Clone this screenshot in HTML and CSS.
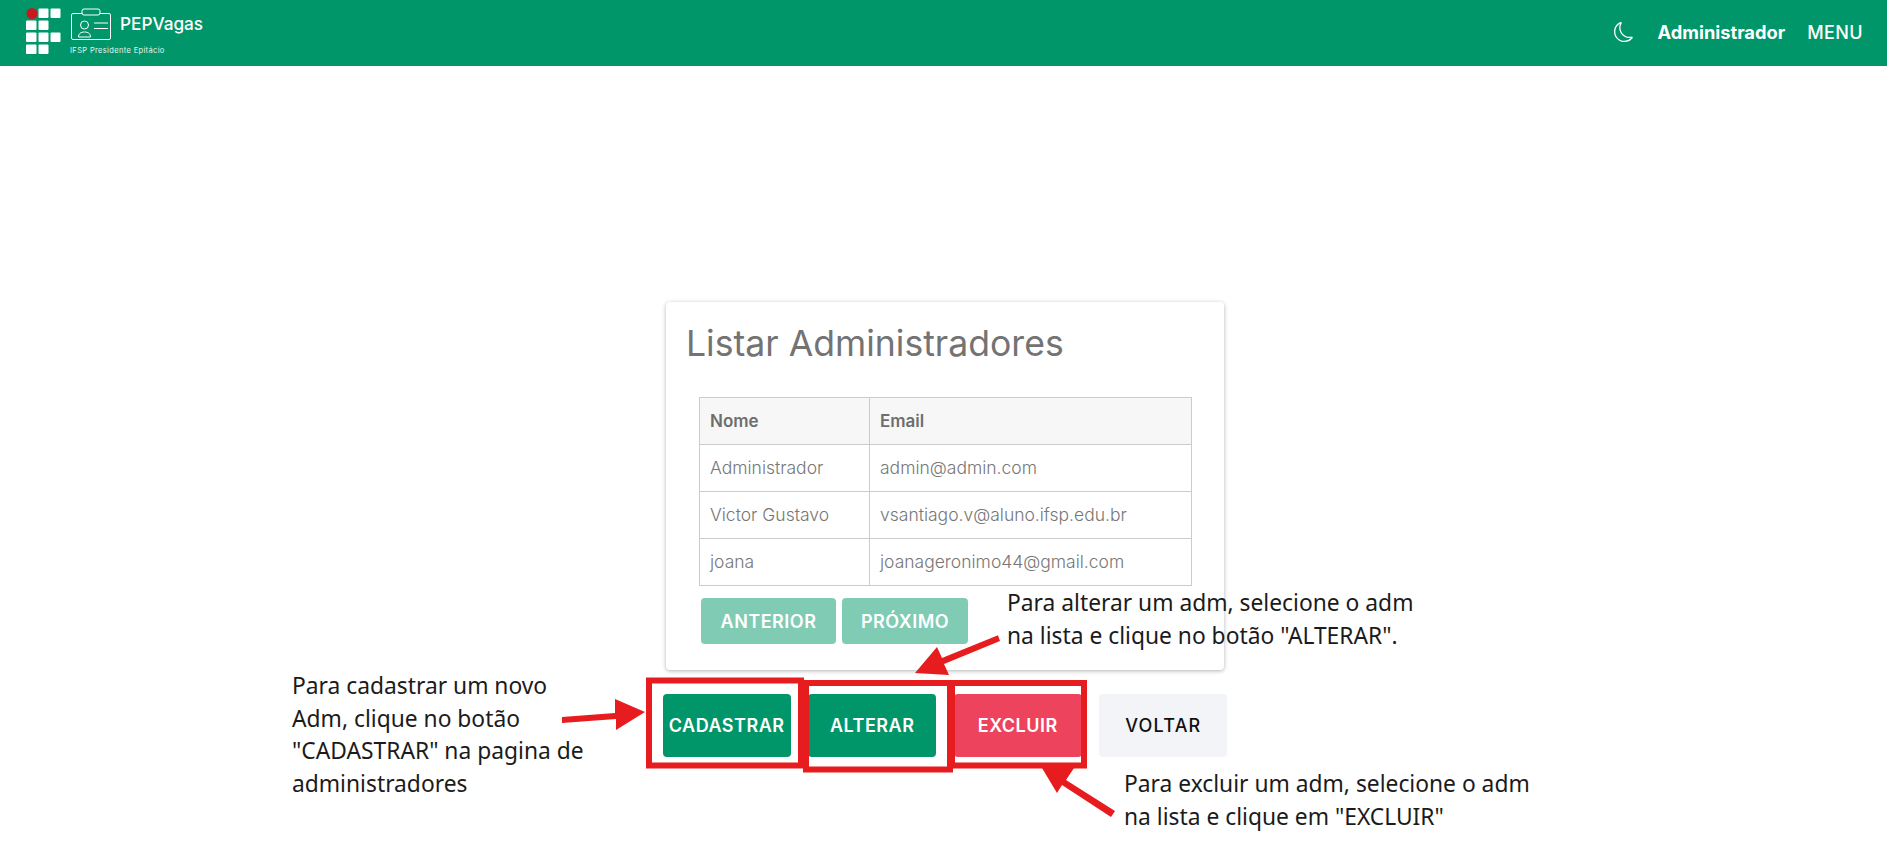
FILE: index.html
```html
<!DOCTYPE html>
<html lang="pt-BR">
<head>
<meta charset="utf-8">
<title>PEPVagas</title>
<link rel="stylesheet" href="styles.css">
</head>
<body>
<header class="topbar">
  <div class="brand">
    <svg class="if-logo" width="36" height="48" viewBox="0 0 36 48">
      <circle cx="6" cy="5.500" r="5.500" fill="#c8191f"/>
      <g fill="#fff">
        <rect x="12.500" y="0.500" width="10" height="9.500" rx="1"/><rect x="24.500" y="0.500" width="10" height="9.500" rx="1"/>
        <rect y="12.500" width="10.500" height="9.500" rx="1"/><rect x="12.500" y="12.500" width="10" height="9.500" rx="1"/>
        <rect y="24.500" width="10.500" height="9.500" rx="1"/><rect x="12.500" y="24.500" width="10" height="9.500" rx="1"/><rect x="24.500" y="24.500" width="10" height="9.500" rx="1"/>
        <rect y="36.500" width="10.500" height="9.500" rx="1"/><rect x="12.500" y="36.500" width="10" height="9.500" rx="1"/>
      </g>
    </svg>
    <div class="brand-text">
      <div class="brand-row">
        <svg class="badge-icon" width="42" height="32" viewBox="0 0 42 32" fill="none" stroke="#fff" stroke-width="1">
          <rect x="1.500" y="5.500" width="39" height="26" rx="1.500"/>
          <rect x="12" y="1" width="18" height="6" rx="2" fill="#009669"/>
          <circle cx="14.500" cy="17" r="4"/>
          <path d="M8.500 29c0-3.500 2.500-5 6-5s6 1.500 6 5z"/>
          <path d="M24 15h14M24 20.500h14"/>
        </svg>
        <span class="brand-name">PEPVagas</span>
      </div>
      <div class="brand-sub">IFSP Presidente Epitácio</div>
    </div>
  </div>
  <nav class="topnav">
    <svg class="moon" width="20" height="20" viewBox="0 0 16 16" fill="#fff">
      <path d="M6 .278a.768.768 0 0 1 .08.858 7.208 7.208 0 0 0-.878 3.46c0 4.021 3.278 7.277 7.318 7.277.527 0 1.04-.055 1.533-.16a.787.787 0 0 1 .81.316.733.733 0 0 1-.031.893A8.349 8.349 0 0 1 8.344 16C3.734 16 0 12.286 0 7.71 0 4.266 2.114 1.312 5.124.06A.752.752 0 0 1 6 .278zM4.858 1.311A7.269 7.269 0 0 0 1.025 7.71c0 4.02 3.279 7.276 7.319 7.276a7.316 7.316 0 0 0 5.205-2.162c-.337.042-.68.063-1.029.063-4.61 0-8.343-3.714-8.343-8.29 0-1.167.242-2.278.681-3.286z"/>
    </svg>
    <span class="nav-user">Administrador</span>
    <span class="nav-menu">MENU</span>
  </nav>
</header>

<main class="content">
  <section class="card">
    <h1 class="card-title">Listar Administradores</h1>
    <table class="admin-table">
      <thead>
        <tr><th class="col-name">Nome</th><th>Email</th></tr>
      </thead>
      <tbody>
        <tr><td>Administrador</td><td>admin@admin.com</td></tr>
        <tr><td>Victor Gustavo</td><td>vsantiago.v@aluno.ifsp.edu.br</td></tr>
        <tr><td>joana</td><td>joanageronimo44@gmail.com</td></tr>
      </tbody>
    </table>
    <div class="pager">
      <button class="btn-page">ANTERIOR</button>
      <button class="btn-page">PRÓXIMO</button>
    </div>
  </section>
  <div class="actions">
    <button class="btn btn-green">CADASTRAR</button>
    <button class="btn btn-green">ALTERAR</button>
    <button class="btn btn-red">EXCLUIR</button>
    <button class="btn btn-light">VOLTAR</button>
  </div>
</main>

<svg class="marks" width="1887" height="852" viewBox="0 0 1887 852" fill="none">
  <g stroke="#e71c1e" stroke-width="6">
    <rect x="649" y="680.500" width="152" height="85"/>
    <rect x="952" y="683" width="132" height="82.500"/>
    <rect x="806" y="683" width="144" height="86.500"/>
  </g>
  <g fill="#e71c1e">
    <path d="M562 717L615 713L615 699L645 712L616 730L616 719L562 723z"/>
    <path d="M998 635.200L942 658L937 647L915 673L949 675L944 664L1000 641z"/>
    <path d="M1042 768L1074 768L1066 780L1115 811L1111 817L1062 785L1057 793z"/>
  </g>
</svg>
<p class="note note-create">Para cadastrar um novo<br>Adm, clique no botão<br>"CADASTRAR" na pagina de<br>administradores</p>
<p class="note note-edit">Para alterar um adm, selecione o adm<br>na lista e clique no botão "ALTERAR".</p>
<p class="note note-delete">Para excluir um adm, selecione o adm<br>na lista e clique em "EXCLUIR"</p>
</body>
</html>
```
FILE: styles.css
```css
html, body {
  margin: 0;
  padding: 0;
  height: 852px;
  overflow: hidden;
  background: #fff;
  font-family: Inter, "Liberation Sans", sans-serif;
}
.topbar {
  height: 66px;
  background: #009669;
  color: #fff;
  display: flex;
  align-items: center;
  justify-content: space-between;
  padding: 0 24px 0 26px;
  box-sizing: border-box;
}
.brand {
  display: flex;
  align-items: flex-start;
  gap: 10px;
  margin-top: -4px;
}
.if-logo { display: block; margin-top: 1px; }
.brand-text { margin-top: 1px; margin-left: -2px; }
.brand-row {
  display: flex;
  align-items: center;
  gap: 8px;
}
.brand-name {
  font-size: 17.200px;
  font-weight: 500;
  line-height: 32px;
}
.brand-sub {
  font-size: 7.500px;
  line-height: 10px;
  margin-top: 6px;
  letter-spacing: .35px;
  color: #e8f5f0;
}
.topnav {
  display: flex;
  align-items: center;
  padding-bottom: 2px;
}
.moon { margin-right: 24px; }
.nav-user {
  font-size: 18.300px;
  font-weight: 700;
  margin-right: 22px;
}
.nav-menu {
  font-size: 18px;
  font-weight: 500;
  letter-spacing: .4px;
}
.content {
  display: flex;
  flex-direction: column;
  align-items: center;
  padding: 236px 0 0 3px;
}
.card {
  width: 558px;
  height: 368px;
  box-sizing: border-box;
  padding: 0 33px 0 20px;
  background: #fff;
  border-radius: 4px;
  box-shadow: 0 1px 4px rgba(0, 0, 0, .3);
}
.card-title {
  margin: 20px 0 31px 0;
  font-size: 35.600px;
  line-height: 44px;
  font-weight: 400;
  color: #737373;
}
.admin-table {
  margin-left: 13px;
  width: 493px;
  border-collapse: collapse;
  font-size: 17.500px;
  color: #777;
}
.admin-table th, .admin-table td {
  height: 47px;
  box-sizing: border-box;
  padding: 0 10px;
  border: 1px solid #ccc;
  text-align: left;
  font-weight: 300;
}
.admin-table td { padding-bottom: 2px; }
.admin-table th {
  background: #f7f7f7;
  font-weight: 600;
  font-size: 17px;
  color: #6e6e6e;
}
.col-name { width: 170px; }
.pager {
  display: flex;
  gap: 6px;
  margin: 12px 0 0 15px;
}
.btn-page {
  width: 135px;
  height: 46px;
  border: 0;
  border-radius: 4px;
  background: #80cbb4;
  color: #fff;
  font: 600 18px Inter, sans-serif;
  letter-spacing: .5px;
}
.btn-page + .btn-page { width: 126px; }
.actions {
  display: flex;
  gap: 17.600px;
  margin-top: 24px;
}
.btn {
  width: 128px;
  height: 63px;
  border: 0;
  border-radius: 4px;
  padding: 0;
  font: 600 18px Inter, sans-serif;
  letter-spacing: .5px;
  color: #fff;
}
.btn-green { background: #009669; }
.btn-red { background: #ee435d; }
.btn-light { background: #f3f4f8; color: #111; font-weight: 500; letter-spacing: 1.200px; }
.marks {
  position: absolute;
  left: 0;
  top: 0;
}
.note {
  position: absolute;
  margin: 0;
  font-family: "Noto Sans", sans-serif;
  font-size: 22.800px;
  line-height: 32.500px;
  color: #1b1b1b;
  white-space: nowrap;
}
.note-create { left: 292px; top: 670px; }
.note-edit { left: 1007px; top: 587px; }
.note-delete { left: 1124px; top: 768px; }
```
